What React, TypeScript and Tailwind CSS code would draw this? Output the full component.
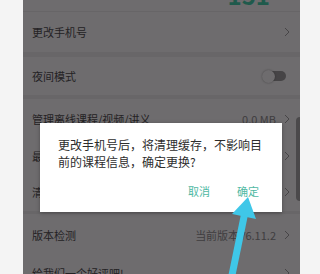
import React from 'react';

const font = { fontFamily: '"Noto Sans CJK SC", "Noto Sans", sans-serif' };

function Chevron() {
  return (
    <svg width="6" height="10" viewBox="0 0 6 10" className="shrink-0">
      <path d="M1 1 L5 5 L1 9" fill="none" stroke="#474547" strokeWidth="1" />
    </svg>
  );
}

function Row({ label, value, h, chevron = true }: { label: string; value?: string; h: string; chevron?: boolean }) {
  return (
    <div className={`flex items-center justify-between pl-[9px] pr-[10px] ${h}`}>
      <span className="text-[11px] text-[#242224]">{label}</span>
      <div className="flex items-center gap-[8px]">
        {value && <span className="text-[11px] text-[#3f3d3f]">{value}</span>}
        {chevron && <Chevron />}
      </div>
    </div>
  );
}

export default function App() {
  return (
    <div className="relative w-[320px] h-[274px] bg-[#f4f4f4] flex overflow-hidden" style={font}>
      <div className="ml-[23px] w-[277px] h-[274px] relative overflow-hidden bg-[#6e6c6e]">
        {/* settings list (dimmed) */}
        <div className="flex flex-col">
          <div className="flex items-end justify-between pl-[9px] pr-[30px] h-[12px] overflow-hidden border-b border-[#676567]">
            <span className="text-[11px] leading-[11px] mb-[11px] text-[#262426]">绑定手机号</span>
            <span className="text-[24px] leading-[24px] mb-[4px] font-bold text-[#1f5a4c]">151</span>
          </div>
          <Row label="更改手机号" h="h-[40px]" />
          <div className="h-[5px] bg-[#686668]" />
          <div className="flex items-center justify-between pl-[9px] pr-[14px] h-[38px]">
            <span className="text-[11px] text-[#242224]">夜间模式</span>
            <div className="relative w-[24px] h-[14px] flex items-center">
              <div className="absolute right-0 w-[18px] h-[10px] rounded-full bg-[#464446]" />
              <div className="absolute left-0 w-[13px] h-[13px] rounded-full bg-[#6e6c6e] shadow-[0_0_2px_rgba(0,0,0,0.35)]" />
            </div>
          </div>
          <div className="h-[4px] bg-[#686668]" />
          <Row label="管理离线课程/视频/讲义" value="0.0 MB" h="h-[40px]" />
          <Row label="最近学习记录" h="h-[34px]" />
          <Row label="清除缓存" h="h-[38px]" />
          <div className="h-[3px] bg-[#686668]" />
          <Row label="版本检测" value="当前版本V6.11.2" h="h-[42px]" />
          <Row label="给我们一个好评吧!" h="h-[34px]" />
        </div>

        {/* scrollbar */}
        <div className="absolute right-0 top-[117px] w-[4px] h-[84px] rounded-l-full bg-[#4b494b]" />

        {/* dialog */}
        <div className="absolute left-[17px] top-[123px] w-[242px] h-[89px] bg-white shadow-[0_1px_4px_rgba(0,0,0,0.3)] flex flex-col">
          <div className="pl-[18px] pt-[13px] text-[12px] leading-[17px] text-[#2d2d2d]">
            <div className="whitespace-nowrap">更改手机号后，将清理缓存，不影响目</div>
            <div className="whitespace-nowrap">前的课程信息，确定更换?</div>
          </div>
          <div className="flex justify-end gap-[27px] pr-[23px] mt-[13px] text-[11px] text-[#4fb9a3]">
            <span>取消</span>
            <span>确定</span>
          </div>
        </div>
      </div>

      {/* annotation arrow */}
      <svg className="absolute left-0 top-0 pointer-events-none" width="320" height="274" viewBox="0 0 320 274">
        <line x1="231" y1="280" x2="245" y2="212" stroke="#3fc7e8" strokeWidth="7" />
        <polygon points="248,197 256,219 232,214" fill="#3fc7e8" />
      </svg>
    </div>
  );
}
